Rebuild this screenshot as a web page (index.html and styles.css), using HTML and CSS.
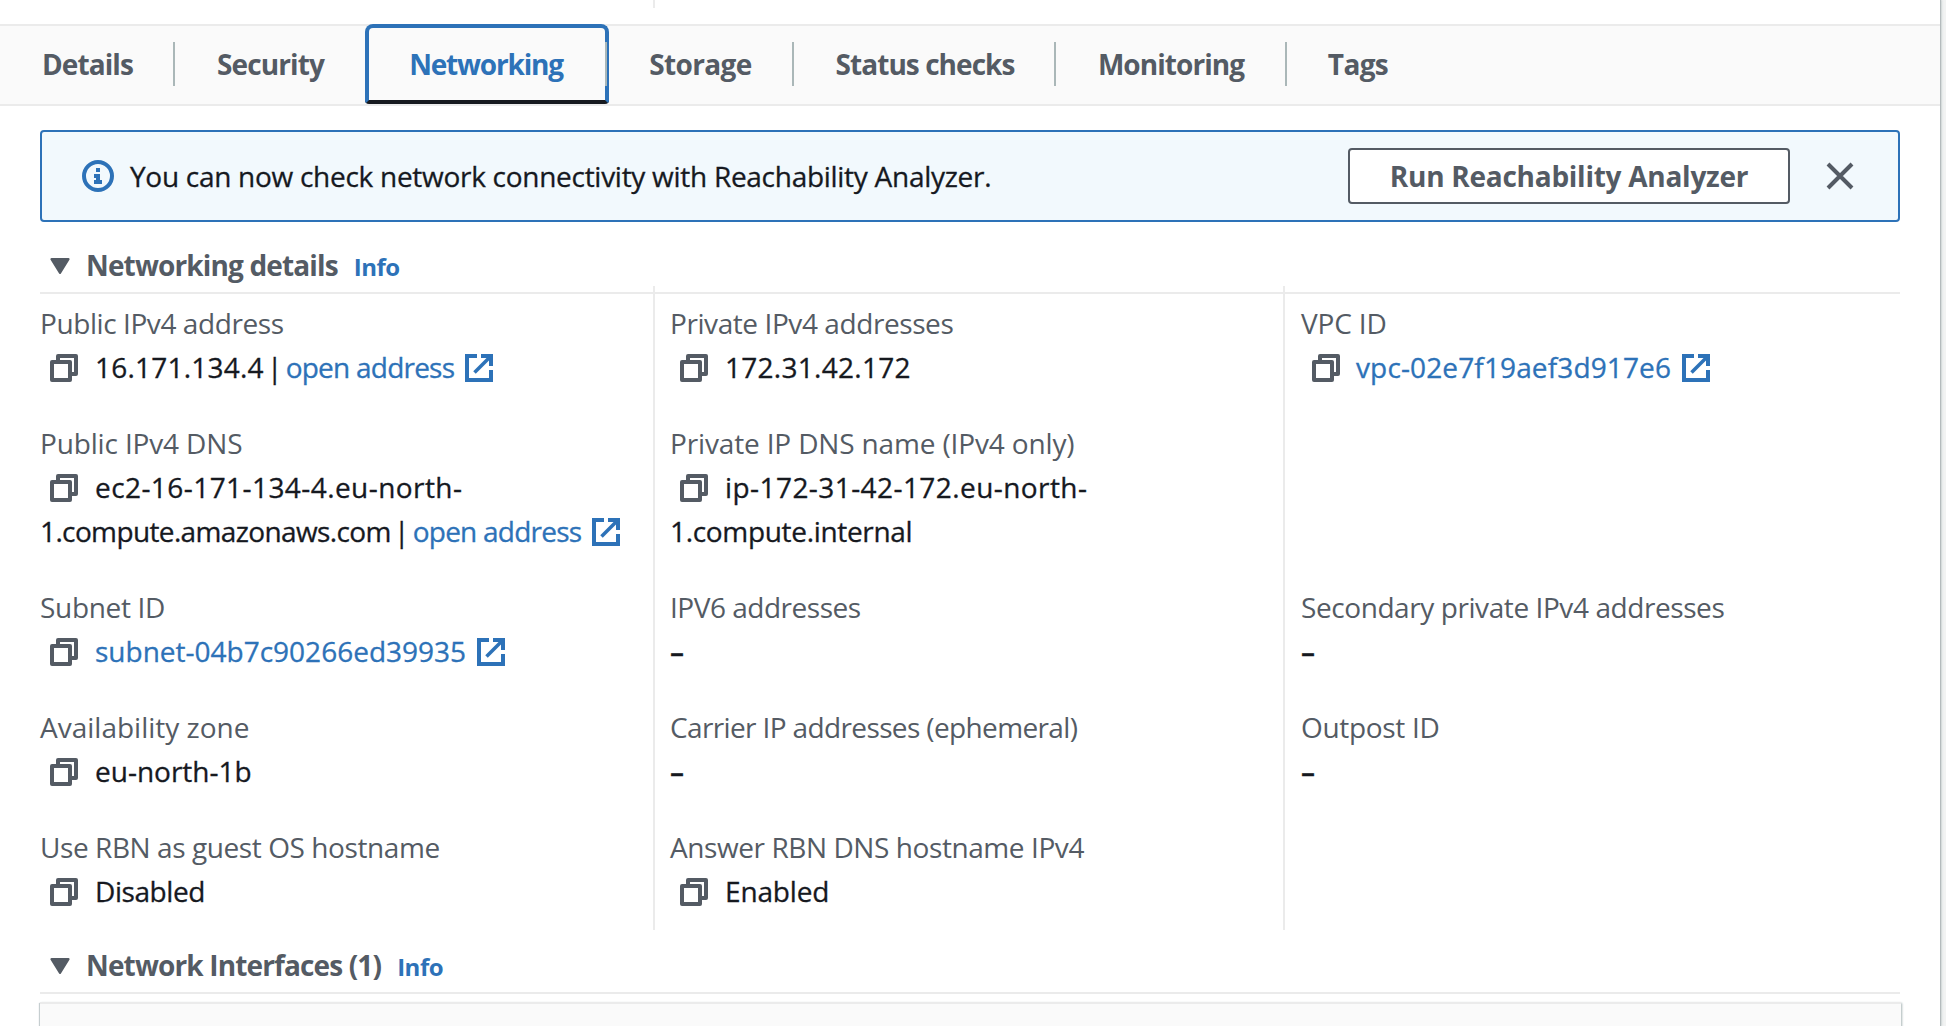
FILE: index.html
```
<!DOCTYPE html>
<html lang="en">
<head>
<meta charset="utf-8">
<title>Instance networking</title>
<link rel="stylesheet" href="styles.css">
</head>
<body>
<svg class="sprite" aria-hidden="true">
  <symbol id="copy" viewBox="0 0 28 28"><path d="M8 8V2h18v18h-6M2 8h18v18H2z" fill="none" stroke="currentColor" stroke-width="4" stroke-linejoin="round"/></symbol>
  <symbol id="external" viewBox="0 0 28 28"><path d="M12 2H2v24h24V16M16 2h10v10" fill="none" stroke="currentColor" stroke-width="4"/><path d="M25 3 9.5 18.5" fill="none" stroke="currentColor" stroke-width="3.6"/></symbol>
  <symbol id="caret" viewBox="0 0 20 16"><path d="M1.5 1.2h17L10 14.8z" fill="currentColor" stroke="currentColor" stroke-width="2.2" stroke-linejoin="round"/></symbol>
</svg>
<main class="panel">
  <div class="upper"><span class="stub"></span></div>
  <nav class="tabs">
    <a class="tab details">Details</a>
    <a class="tab security">Security</a>
    <a class="tab networking active">Networking</a>
    <a class="tab storage">Storage</a>
    <a class="tab status">Status checks</a>
    <a class="tab monitoring">Monitoring</a>
    <a class="tab tags">Tags</a>
  </nav>

  <section class="alert">
    <svg class="info-icon" viewBox="0 0 32 32"><circle cx="16" cy="16" r="14" fill="none" stroke="currentColor" stroke-width="4"/><path d="M14 8h4v4h-4zM12 14h6v6h2v4h-8v-4h2v-2h-2z" fill="currentColor"/></svg>
    <p class="alert-text">You can now check network connectivity with Reachability Analyzer.</p>
    <button class="button">Run Reachability Analyzer</button>
    <svg class="close" viewBox="0 0 28 28"><path d="m2 2 24 24M26 2 2 26" fill="none" stroke="currentColor" stroke-width="4"/></svg>
  </section>

  <header class="section-head">
    <svg class="caret"><use href="#caret"/></svg>
    <h2>Networking details</h2>
    <a class="info">Info</a>
  </header>

  <div class="columns">
    <dl class="column">
      <div class="field"><dt class="k4">Public IPv4 address</dt><dd><svg class="copy"><use href="#copy"/></svg><span class="w2">16.171.134.4</span><span class="bar">|</span><a class="k8">open address</a><svg class="external"><use href="#external"/></svg></dd></div>
      <div class="field tall"><dt class="k2">Public IPv4 DNS</dt><dd><svg class="copy"><use href="#copy"/></svg><span class="w4">ec2-16-171-134-4.eu-north-</span><br><span class="k6">1.compute.amazonaws.com</span><span class="bar">|</span><a class="k8">open address</a><svg class="external"><use href="#external"/></svg></dd></div>
      <div class="field"><dt class="k3">Subnet ID</dt><dd><svg class="copy"><use href="#copy"/></svg><a>subnet-04b7c90266ed39935</a><svg class="external"><use href="#external"/></svg></dd></div>
      <div class="field"><dt>Availability zone</dt><dd><svg class="copy"><use href="#copy"/></svg>eu-north-1b</dd></div>
      <div class="field"><dt class="k4">Use RBN as guest OS hostname</dt><dd><svg class="copy"><use href="#copy"/></svg><span class="k4">Disabled</span></dd></div>
    </dl>
    <dl class="column">
      <div class="field"><dt class="k4">Private IPv4 addresses</dt><dd><svg class="copy"><use href="#copy"/></svg><span class="w3">172.31.42.172</span></dd></div>
      <div class="field tall"><dt class="k2">Private IP DNS name (IPv4 only)</dt><dd><svg class="copy"><use href="#copy"/></svg><span class="w4">ip-172-31-42-172.eu-north-</span><br><span class="k3">1.compute.internal</span></dd></div>
      <div class="field"><dt class="k5">IPV6 addresses</dt><dd class="none">–</dd></div>
      <div class="field"><dt class="k6">Carrier IP addresses (ephemeral)</dt><dd class="none">–</dd></div>
      <div class="field"><dt class="k4">Answer RBN DNS hostname IPv4</dt><dd><svg class="copy"><use href="#copy"/></svg><span class="k2">Enabled</span></dd></div>
    </dl>
    <dl class="column last">
      <div class="field"><dt class="k2">VPC ID</dt><dd><svg class="copy"><use href="#copy"/></svg><a class="w1">vpc-02e7f19aef3d917e6</a><svg class="external"><use href="#external"/></svg></dd></div>
      <div class="field tall"></div>
      <div class="field"><dt class="k4">Secondary private IPv4 addresses</dt><dd class="none">–</dd></div>
      <div class="field"><dt class="k3">Outpost ID</dt><dd class="none">–</dd></div>
    </dl>
  </div>

  <header class="section-head compact">
    <svg class="caret"><use href="#caret"/></svg>
    <h2>Network Interfaces (1)</h2>
    <a class="info">Info</a>
  </header>
  <div class="table-top"></div>
</main>
</body>
</html>
```
FILE: styles.css
```
*, *::before, *::after { box-sizing: border-box; }
body {
  margin: 0;
  height: 1026px;
  overflow: hidden;
  background: #f2f3f3;
  color: #16191f;
  font: 400 28px/44px "Open Sans", "Noto Sans", sans-serif;
}
.sprite { display: none; }
.panel {
  width: 1940px;
  height: 1026px;
  overflow: clip;
  overflow-clip-margin: 6px;
  background: #fff;
  box-shadow: 1px 0 1px #b4bbbd, 2px 0 2px #d5dbdb;
}

.upper { height: 24px; padding-left: 653px; }
.stub { display: block; width: 2px; height: 8px; background: #ebebeb; }

/* tabs */
.tabs {
  display: flex;
  height: 82px;
  background: #fafafa;
  border-top: 2px solid #ebebeb;
  border-bottom: 2px solid #ebebeb;
}
.tab {
  position: relative;
  display: flex;
  align-items: center;
  justify-content: center;
  height: 78px;
  padding-bottom: 2px;
  font-weight: 700;
  color: #545b64;
  letter-spacing: -0.9px;
}
.tab::before {
  content: "";
  position: absolute;
  z-index: 2;
  right: 0;
  top: 16px;
  width: 2px;
  height: 44px;
  background: #aab7b8;
}
.details { width: 175px; }
.security { width: 191px; }
.networking { width: 241px; padding-right: 1px; letter-spacing: -1.2px; }
.storage { width: 187px; letter-spacing: -0.65px; }
.status { width: 262px; letter-spacing: -0.95px; }
.monitoring { width: 231px; padding-right: 1px; letter-spacing: -0.95px; }
.tags { width: 142px; letter-spacing: -0.65px; }
.security::before, .tags::before { display: none; }
.active { color: #2d72b8; }
.active::after {
  content: "";
  position: absolute;
  z-index: 1;
  left: -1px;
  right: -2px;
  top: -2px;
  height: 80px;
  border: 4px solid #2d72b8;
  border-bottom-color: #16191f;
  border-radius: 8px 8px 4px 4px;
}

/* alert */
.alert {
  display: flex;
  align-items: center;
  width: 1860px;
  height: 92px;
  margin: 24px 0 0 40px;
  padding-left: 40px;
  background: #f2f9fd;
  border: 2px solid #2d72b8;
  border-radius: 4px;
}
.info-icon { width: 32px; height: 32px; color: #2d72b8; }
.alert-text { flex: 1; margin: 0 0 0 16px; letter-spacing: -0.28px; white-space: nowrap; }
.button {
  width: 442px;
  height: 56px;
  padding: 0;
  background: #fff;
  border: 2px solid #545b64;
  border-radius: 4px;
  font: inherit;
  font-weight: 700;
  letter-spacing: -0.26px;
  color: #545b64;
}
.close { width: 28px; height: 28px; margin: 0 44px 0 36px; color: #545b64; }

/* section headings */
.section-head {
  display: flex;
  align-items: baseline;
  width: 1860px;
  height: 72px;
  margin-left: 40px;
  padding: 21px 0 0 10px;
  border-bottom: 2px solid #ebebeb;
}
.section-head.compact { height: 64px; padding-top: 13px; }
.section-head h2 {
  margin: 0 0 0 16px;
  font-size: 28px;
  font-weight: 700;
  letter-spacing: -0.86px;
  color: #545b64;
}
.caret { width: 20px; height: 16px; color: #545b64; transform: translateY(-2px); }
.info { margin-left: 16px; font-size: 24px; font-weight: 700; letter-spacing: -0.5px; color: #2d72b8; }

/* details */
.columns { display: flex; height: 644px; margin-top: -8px; }
.column { width: 630px; margin: 0; padding: 15px 0 0 15px; border-left: 2px solid #ebebeb; white-space: nowrap; }
.column:first-child { width: 653px; padding-left: 40px; border: 0; }
.column.last { padding-left: 16px; }
.field { height: 88px; margin-bottom: 32px; }
.tall { height: 132px; }
dt { color: #545b64; }
dd { margin: 0; }
dd a { color: #2d72b8; }
.alert-text, dd { -webkit-text-stroke: 0.3px; }
.none { font-weight: 600; }
.copy { width: 28px; height: 28px; margin: 0 17px 0 10px; vertical-align: -4px; color: #545b64; }
.last .copy { margin: 0 16px 0 11px; }
.external { width: 28px; height: 28px; margin-left: 11px; vertical-align: -4px; color: #2d72b8; }
.bar { display: inline-block; width: 22px; text-align: center; }

/* tracking */
.k8 { letter-spacing: -0.77px; }
.k6 { letter-spacing: -0.63px; }
.k5 { letter-spacing: -0.48px; }
.k4 { letter-spacing: -0.42px; }
.k3 { letter-spacing: -0.32px; }
.k2 { letter-spacing: -0.15px; }
.w1 { letter-spacing: 0.13px; }
.w2 { letter-spacing: 0.21px; }
.w3 { letter-spacing: 0.28px; }
.w4 { letter-spacing: 0.43px; }

/* interfaces table */
.table-top {
  width: 1861px;
  height: 60px;
  margin: 8px 0 0 40px;
  background: #fafafa;
  border-top: 2px solid #ebebeb;
  box-shadow: 1px 1px 2px #aab7b8, -1px 1px 1px #c9d0d2;
}
```
